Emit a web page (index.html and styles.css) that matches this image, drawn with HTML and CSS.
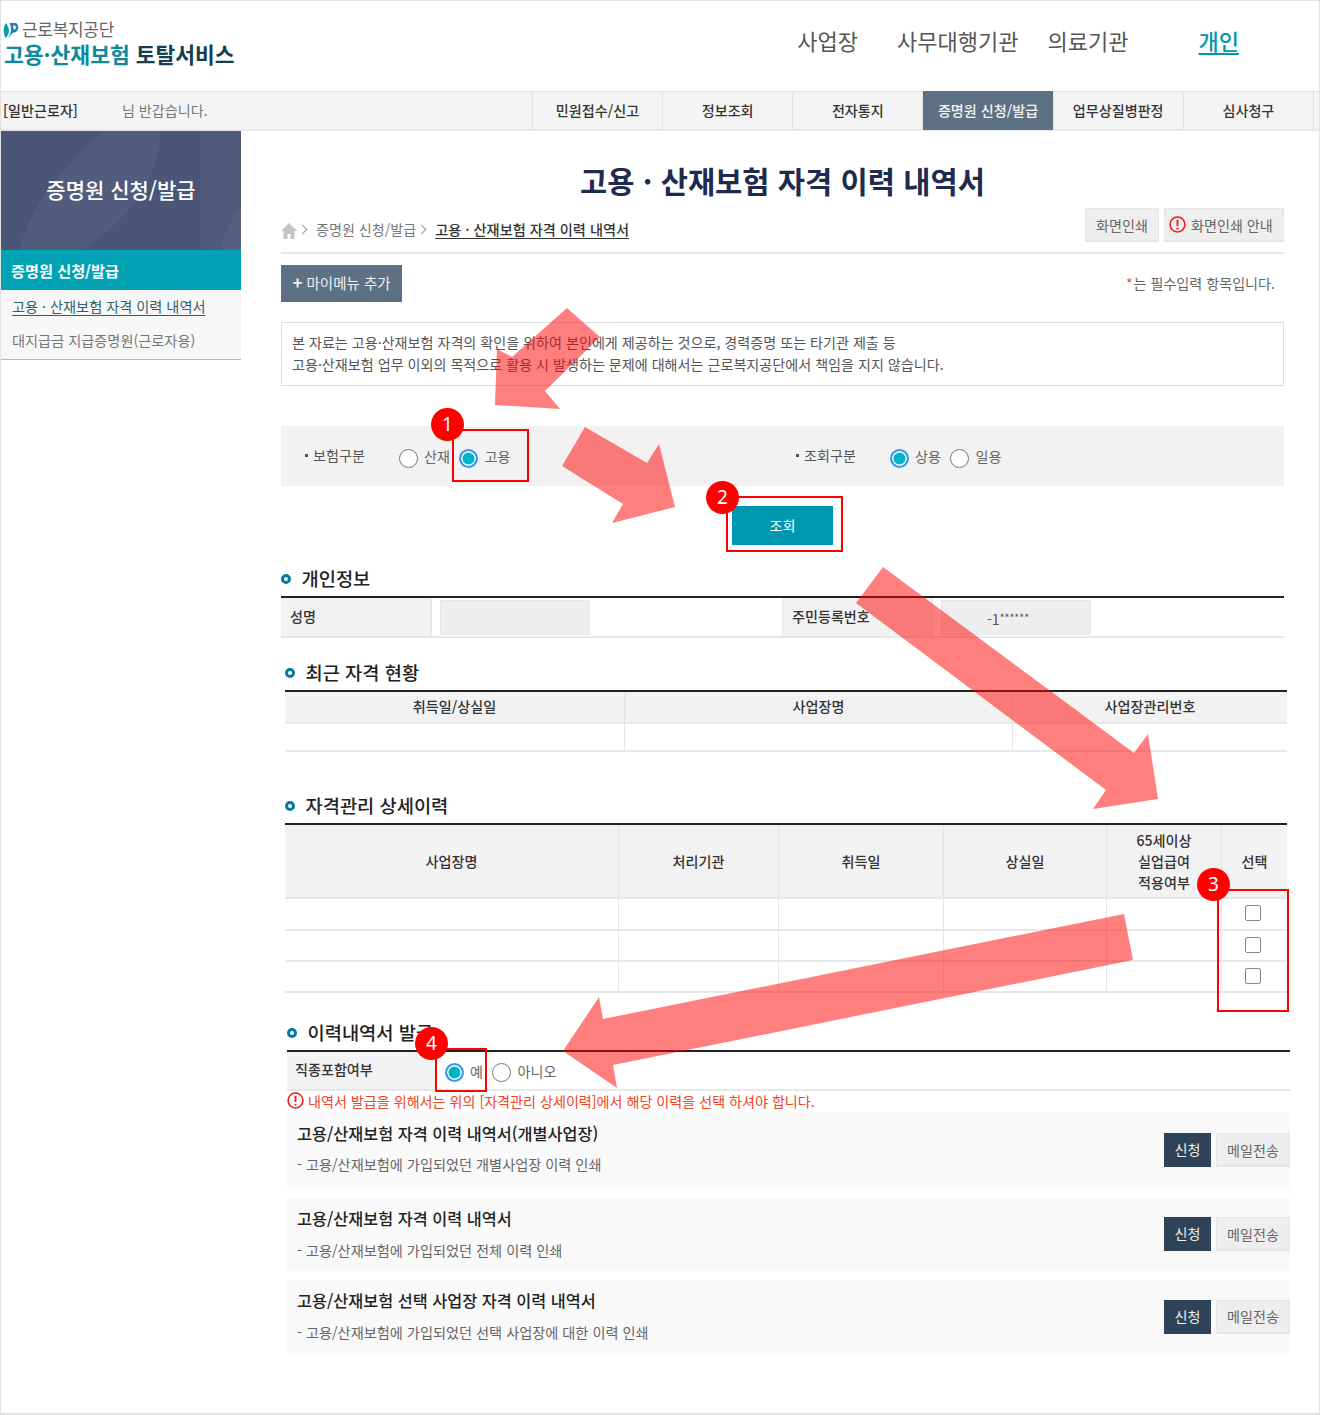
FILE: index.html
```html
<!DOCTYPE html>
<html lang="ko">
<head>
    <meta charset="UTF-8">
    <meta name="viewport" content="width=device-width, initial-scale=1.0">
    <title>고용·산재보험 토탈서비스</title>
    <link rel="stylesheet" href="styles.css">
</head>
<body>
<div class="page">
    <header class="top">
        <div class="logo">
            <div class="logo-org">
                <svg class="logo-mark" width="16" height="17" viewBox="0 0 16 17">
                    <path d="M3 1C0 5 0 11 2.500 16C7 12 7 6 3 1Z" fill="#0a9fb0"/>
                    <path d="M6.500 1H12C16.500 1 16.500 10 11 10.500C9 10.800 8 13 5 16C8.500 11 9 6 6.500 1Z" fill="#1c7fb5"/>
                    <path d="M10 3.500H11.500C13.500 3.500 13.500 7.500 11 7.500H10.500Z" fill="#fff"/>
                </svg>
                <span>근로복지공단</span>
            </div>
            <div class="logo-name"><span class="logo-teal">고용·산재보험</span> 토탈서비스</div>
        </div>
        <nav class="gnb">
            <a class="gnb-a">사업장</a>
            <a class="gnb-b">사무대행기관</a>
            <a class="gnb-c">의료기관</a>
            <a class="gnb-d">개인</a>
        </nav>
    </header>

    <div class="bar">
        <div class="user"><strong>[일반근로자]</strong><span class="hello">님 반갑습니다.</span></div>
        <ul class="tabs">
            <li>민원접수/신고</li>
            <li>정보조회</li>
            <li>전자통지</li>
            <li class="on">증명원 신청/발급</li>
            <li>업무상질병판정</li>
            <li>심사청구</li>
        </ul>
    </div>

    <div class="main">
        <aside class="side">
            <div class="side-title">
                <svg class="side-bg" width="240" height="119" viewBox="0 0 240 119">
                    <rect x="200" y="0" width="40" height="119" fill="#4e597b"/>
                    <path d="M18 119C30 70 70 30 101 0H160C160 40 130 90 80 119Z" fill="#525d7e"/>
                    <path d="M219 119C224 100 232 85 240 76V119Z" fill="#565f81"/>
                </svg>
                <span>증명원 신청/발급</span>
            </div>
            <div class="side-on">증명원 신청/발급</div>
            <ul class="side-list">
                <li class="cur">고용 · 산재보험 자격 이력 내역서</li>
                <li>대지급금 지급증명원(근로자용)</li>
            </ul>
        </aside>

        <section class="content">
            <h1>고용 · 산재보험 자격 이력 내역서</h1>

            <div class="crumb-row">
                <div class="crumb">
                    <svg class="home" width="16" height="16" viewBox="0 0 16 16">
                        <path d="M8 0L16 8H13.500V16H9.500V11H6.500V16H2.500V8H0Z" fill="#c4c4c4"/>
                    </svg>
                    <span class="chev"></span>
                    <span>증명원 신청/발급</span>
                    <span class="chev"></span>
                    <strong>고용 · 산재보험 자격 이력 내역서</strong>
                </div>
                <div class="crumb-btns">
                    <a class="btn-gray btn-print">화면인쇄</a>
                    <a class="btn-gray btn-guide">
                        <svg width="17" height="17" viewBox="0 0 16 16">
                            <circle cx="8" cy="8" r="7" fill="none" stroke="#f01c1c" stroke-width="1.500"/>
                            <path d="M8 3.500V9.500M8 11V12.800" stroke="#f01c1c" stroke-width="1.800"/>
                        </svg>
                        화면인쇄 안내
                    </a>
                </div>
            </div>

            <div class="my-row">
                <a class="btn-my"><b>+</b> 마이메뉴 추가</a>
                <p class="req"><i>*</i>는 필수입력 항목입니다.</p>
            </div>

            <div class="notice">
                본 자료는 고용·산재보험 자격의 확인을 위하여 본인에게 제공하는 것으로, 경력증명 또는 타기관 제출 등<br>
                고용·산재보험 업무 이외의 목적으로 활용 시 발생하는 문제에 대해서는 근로복지공단에서 책임을 지지 않습니다.
            </div>

            <form class="filter">
                <div class="filter-group">
                    <span class="filter-label">보험구분</span>
                    <label class="opt"><input type="radio" name="ins">산재</label>
                    <label class="opt"><input type="radio" name="ins" checked>고용</label>
                </div>
                <div class="filter-group">
                    <span class="filter-label">조회구분</span>
                    <label class="opt"><input type="radio" name="kind" checked>상용</label>
                    <label class="opt"><input type="radio" name="kind">일용</label>
                </div>
            </form>

            <div class="search-row"><button type="button" class="btn-search">조회</button></div>

            <h2 class="sec sec-1">개인정보</h2>
            <table class="tbl tbl-person">
                <tr>
                    <th class="p-label">성명</th>
                    <td class="p-field"><span class="ro"></span></td>
                    <th class="p-label">주민등록번호</th>
                    <td class="p-field"><span class="ro ro-num">-1<small>******</small></span></td>
                </tr>
            </table>

            <h2 class="sec sec-2">최근 자격 현황</h2>
            <table class="tbl tbl-recent">
                <tr>
                    <th class="r-a">취득일/상실일</th>
                    <th class="r-b">사업장명</th>
                    <th class="r-c">사업장관리번호</th>
                </tr>
                <tr class="row-empty"><td></td><td></td><td></td></tr>
            </table>

            <h2 class="sec sec-3">자격관리 상세이력</h2>
            <table class="tbl tbl-detail">
                <tr>
                    <th class="d-a">사업장명</th>
                    <th class="d-b">처리기관</th>
                    <th class="d-c">취득일</th>
                    <th class="d-d">상실일</th>
                    <th class="d-e">65세이상<br>실업급여<br>적용여부</th>
                    <th class="d-f">선택</th>
                </tr>
                <tr><td></td><td></td><td></td><td></td><td></td><td><input type="checkbox" class="chk"></td></tr>
                <tr><td></td><td></td><td></td><td></td><td></td><td><input type="checkbox" class="chk"></td></tr>
                <tr><td></td><td></td><td></td><td></td><td></td><td><input type="checkbox" class="chk"></td></tr>
            </table>

            <h2 class="sec sec-4">이력내역서 발급</h2>
            <div class="issue">
                <table class="tbl tbl-issue">
                    <tr>
                        <th class="i-label">직종포함여부</th>
                        <td>
                            <div class="opts">
                                <label class="opt"><input type="radio" name="job" checked>예</label>
                                <label class="opt"><input type="radio" name="job">아니오</label>
                            </div>
                        </td>
                    </tr>
                </table>
                <p class="warn">
                    <svg width="17" height="17" viewBox="0 0 16 16">
                        <circle cx="8" cy="8" r="7" fill="none" stroke="#f01c1c" stroke-width="1.500"/>
                        <path d="M8 3.500V9.500M8 11V12.800" stroke="#f01c1c" stroke-width="1.800"/>
                    </svg>
                    내역서 발급을 위해서는 위의 [자격관리 상세이력]에서 해당 이력을 선택 하셔야 합니다.
                </p>
                <div class="doc doc-first">
                    <div class="doc-text">
                        <h3>고용/산재보험 자격 이력 내역서(개별사업장)</h3>
                        <p>- 고용/산재보험에 가입되었던 개별사업장 이력 인쇄</p>
                    </div>
                    <a class="btn-apply">신청</a>
                    <a class="btn-gray btn-mail">메일전송</a>
                </div>
                <div class="doc">
                    <div class="doc-text">
                        <h3>고용/산재보험 자격 이력 내역서</h3>
                        <p>- 고용/산재보험에 가입되었던 전체 이력 인쇄</p>
                    </div>
                    <a class="btn-apply">신청</a>
                    <a class="btn-gray btn-mail">메일전송</a>
                </div>
                <div class="doc">
                    <div class="doc-text">
                        <h3>고용/산재보험 선택 사업장 자격 이력 내역서</h3>
                        <p>- 고용/산재보험에 가입되었던 선택 사업장에 대한 이력 인쇄</p>
                    </div>
                    <a class="btn-apply">신청</a>
                    <a class="btn-gray btn-mail">메일전송</a>
                </div>
            </div>
        </section>
    </div>

    <!-- annotations drawn over the captured page -->
    <svg class="arrows" width="1320" height="1415" viewBox="0 0 1320 1415">
        <polygon points="567,308 600,337 545,391 560,409 495,405 497,349 512,357"/>
        <polygon points="585,427 647,463 659,444 675,507 612,523 623,504 562,466"/>
        <polygon points="883,567 1134,753 1148,734 1158,799 1093,809 1106,790 856,603"/>
        <polygon points="1124,914 1133,960 613,1065 617,1088 563,1051 599,997 603,1019"/>
    </svg>
    <div class="mark mark-1"></div>
    <div class="mark mark-2"></div>
    <div class="mark mark-3"></div>
    <div class="mark mark-4"></div>
    <div class="num num-1">1</div>
    <div class="num num-2">2</div>
    <div class="num num-3">3</div>
    <div class="num num-4">4</div>
</div>
</body>
</html>
```

FILE: styles.css
```css
* {
    margin: 0;
    padding: 0;
    box-sizing: border-box;
}

body {
    font-family: "Noto Sans CJK KR", "Noto Sans", sans-serif;
    font-size: 14.100px;
    color: #444;
    background: #fff;
}

ul {
    list-style: none;
}

.page {
    position: relative;
    width: 1320px;
    height: 1415px;
    border: 1px solid #e2e2e2;
    border-bottom-width: 2px;
    overflow: hidden;
}

/* header */
.top {
    height: 90px;
    display: flex;
    justify-content: space-between;
}

.logo {
    padding: 18px 0 0 2px;
}

.logo-org {
    display: flex;
    align-items: center;
    gap: 3px;
    height: 20px;
    line-height: 20px;
    font-size: 17px;
    color: #666;
    letter-spacing: -0.3px;
}

.logo-mark {
    margin-top: 3px;
}

.logo-name {
    margin-top: 2px;
    padding-left: 1px;
    height: 26px;
    line-height: 26px;
    font-size: 21.500px;
    font-weight: 700;
    color: #153f4f;
    white-space: nowrap;
}

.logo-teal {
    color: #0c8a9c;
}

.gnb {
    display: flex;
    align-items: center;
    padding-right: 80px;
    font-size: 22px;
    color: #555;
    height: 78px;
}

.gnb-b { margin-left: 39px; }
.gnb-c { margin-left: 29px; }
.gnb-d {
    margin-left: 70px;
    color: #0098ac;
    font-weight: 500;
    text-decoration: underline;
    text-underline-offset: 3px;
}

/* tab bar */
.bar {
    height: 40px;
    display: flex;
    justify-content: space-between;
    background: #f4f4f4;
    border-top: 1px solid #e4e4e4;
    border-bottom: 2px solid #e8e8e8;
}

.user {
    padding-left: 2px;
    line-height: 36px;
    color: #333;
}

.user strong {
    font-weight: 500;
}

.hello {
    margin-left: 44px;
    color: #777;
}

.tabs {
    display: flex;
    margin-right: 5px;
    border-right: 1px solid #e4e4e4;
}

.tabs li {
    width: 130.200px;
    line-height: 36px;
    text-align: center;
    font-weight: 500;
    color: #333;
    border-left: 1px solid #e4e4e4;
    white-space: nowrap;
}

.tabs .on {
    background: #5d7084;
    color: #f4f4f4;
    margin-top: -1px;
    line-height: 38px;
    height: 39px;
}

/* layout */
.main {
    display: flex;
}

.side {
    width: 240px;
    flex: none;
}

.side-title {
    position: relative;
    height: 119px;
    background: #4a5577;
    color: #fff;
    font-size: 21px;
    font-weight: 500;
    line-height: 117px;
    text-align: center;
    overflow: hidden;
}

.side-title span {
    position: relative;
}

.side-bg {
    position: absolute;
    left: 0;
    top: 0;
}

.side-on {
    height: 40px;
    line-height: 40px;
    padding-left: 10px;
    background: #00a2b3;
    color: #fff;
    font-size: 15.200px;
    font-weight: 700;
}

.side-list {
    height: 70px;
    padding-left: 11px;
    background: #f7f7f7;
    border-bottom: 1px solid #bbb;
    font-size: 14.200px;
}

.side-list li {
    height: 34px;
    line-height: 32px;
    color: #777;
}

.side-list .cur {
    color: #2e6070;
    text-decoration: underline;
    text-underline-offset: 3px;
}

.content {
    width: 1040px;
    padding: 31px 0 0 40px;
}

h1 {
    width: 1003px;
    height: 38px;
    line-height: 38px;
    text-align: center;
    font-size: 29.600px;
    font-weight: 700;
    color: #1d2b4f;
}

/* breadcrumb */
.crumb-row {
    width: 1003px;
    height: 46px;
    margin-top: 8px;
    display: flex;
    justify-content: space-between;
    border-bottom: 2px solid #e8e8e8;
}

.crumb {
    display: flex;
    align-items: center;
    height: 42px;
    color: #777;
}

.crumb strong {
    font-size: 14.200px;
    font-weight: 500;
    color: #333;
    text-decoration: underline;
    text-underline-offset: 3px;
}

.home {
    margin-top: 3px;
}

.chev {
    width: 7px;
    height: 7px;
    margin: 0 10px 0 2px;
    border-top: 1px solid #999;
    border-right: 1px solid #999;
    transform: rotate(45deg);
}

.crumb-btns {
    display: flex;
    gap: 5px;
    height: 34px;
}

.btn-gray {
    display: flex;
    align-items: center;
    justify-content: center;
    background: #eee;
    border: 1px solid #e6e6e6;
    border-bottom-width: 2px;
    color: #666;
}

.btn-print { width: 74px; }

.btn-guide {
    width: 120px;
    gap: 5px;
    justify-content: flex-start;
    padding-left: 4px;
}

/* my menu */
.my-row {
    width: 1003px;
    margin-top: 11px;
    height: 37px;
    display: flex;
    justify-content: space-between;
    align-items: center;
}

.btn-my {
    width: 121px;
    height: 37px;
    line-height: 33px;
    text-align: center;
    font-size: 14.500px;
    background: #5d7084;
    color: #eef0f2;
}

.btn-my b {
    font-size: 17px;
}

.req {
    padding: 0 9px 2px 0;
    color: #666;
}

.req i {
    margin-right: 1px;
    color: #f05050;
    font-style: normal;
}

.notice {
    width: 1003px;
    height: 64px;
    margin-top: 20px;
    padding: 8px 10px;
    line-height: 22px;
    border: 1px solid #ddd;
    color: #555;
}

/* search */
.filter {
    width: 1003px;
    height: 60px;
    margin-top: 40px;
    padding-left: 23px;
    display: grid;
    grid-template-columns: 491px 1fr;
    align-items: center;
    background: #f2f2f2;
}

.filter-group {
    display: flex;
    align-items: center;
}

.filter-label {
    position: relative;
    width: 95px;
    padding: 0 0 3px 9px;
    color: #555;
}

.filter-label::before {
    content: "";
    position: absolute;
    left: 1px;
    top: 9px;
    width: 3px;
    height: 3px;
    background: #555;
}

.opts {
    display: flex;
    align-items: center;
}

.opt {
    display: inline-flex;
    align-items: center;
    gap: 6px;
    margin-right: 9.500px;
    color: #666;
}

.opt input {
    appearance: none;
    width: 19px;
    height: 19px;
    margin-top: 4px;
    background: #fff;
    border: 1px solid #777;
    border-radius: 50%;
}

.opt input:checked {
    background: #00b4c8;
    border: 2px solid #3c96ee;
    box-shadow: inset 0 0 0 1.500px #fff;
}

.search-row {
    width: 1003px;
    margin-top: 20px;
    display: flex;
    justify-content: center;
}

.btn-search {
    width: 101px;
    height: 39px;
    padding-bottom: 2px;
    border: 0;
    background: #0098b0;
    color: #fff;
    font: inherit;
}

/* section heading */
.sec {
    position: relative;
    height: 24px;
    line-height: 22px;
    padding-left: 20.500px;
    font-size: 18.700px;
    font-weight: 500;
    color: #222;
}

.sec::before {
    content: "";
    box-sizing: border-box;
    position: absolute;
    left: 0;
    top: 7px;
    width: 10px;
    height: 10px;
    border: 3px solid #007c9e;
    border-radius: 50%;
}

.sec-1 { margin-top: 22px; }
.sec-2 { margin: 23px 0 0 4px; }
.sec-3 { margin: 42px 0 0 4px; }
.sec-4 { margin: 28px 0 0 6px; }

/* tables */
.tbl {
    width: 1003px;
    margin-top: 5px;
    table-layout: fixed;
    border-collapse: separate;
    border-spacing: 0;
    border-top: 2px solid #222;
}

.tbl th {
    font-weight: 500;
    color: #333;
    background: #f2f2f2;
    border-bottom: 2px solid #e8e8e8;
    border-right: 1px solid #e4e4e4;
}

.tbl td {
    border-bottom: 2px solid #e8e8e8;
    border-right: 1px solid #e6e6ec;
    text-align: center;
}

.tbl tr > :last-child {
    border-right: 0;
}

.tbl-person tr {
    height: 40px;
}

.tbl-person th {
    width: 151px;
    padding: 0 0 2px 9px;
    text-align: left;
}

.tbl-person th:nth-child(3) {
    width: 150px;
}

.tbl-person td {
    padding-left: 8px;
    text-align: left;
    vertical-align: middle;
}

.ro {
    display: block;
    width: 150px;
    height: 35px;
    line-height: 33px;
    text-align: center;
    background: #eee;
    border: 1px solid #e6e6e6;
    color: #555;
}

.ro-num {
    padding-right: 16px;
}

.ro small {
    font-size: 10.500px;
    vertical-align: 3px;
}

.tbl-recent,
.tbl-detail {
    margin-left: 4px;
    width: 1002px;
}

.tbl-recent tr {
    height: 32px;
}

.tbl-recent th {
    padding-bottom: 3px;
}

.tbl-recent .row-empty {
    height: 28px;
}

.r-a { width: 340px; }
.r-b { width: 388px; }

.tbl-detail tr {
    height: 31px;
}

.tbl-detail tr:first-child {
    height: 74px;
}

.tbl-detail tr:nth-child(2) {
    height: 32px;
}

.tbl-detail th {
    line-height: 21px;
}

.d-a { width: 334px; }
.d-b { width: 160px; }
.d-c { width: 165px; }
.d-d { width: 163px; }
.d-e { width: 115px; }

.chk {
    appearance: none;
    display: block;
    width: 16px;
    height: 16px;
    margin: -2px 0 0 23px;
    background: #fff;
    border: 1px solid #888;
    border-radius: 2px;
}

.issue {
    width: 1003px;
    margin-left: 6px;
}

.tbl-issue tr {
    height: 39px;
}

.tbl-issue th {
    width: 149px;
    padding: 0 0 3px 8px;
    text-align: left;
    border-right: 0;
}

.tbl-issue td {
    padding: 0 0 0 9px;
    text-align: left;
    border-right: 0;
}

.warn {
    display: flex;
    align-items: center;
    gap: 4px;
    height: 21px;
    padding-bottom: 2px;
    color: #f0431e;
}

.doc {
    display: flex;
    align-items: center;
    height: 73px;
    margin-top: 9.500px;
    background: #f9f9f9;
}

.doc-first {
    height: 76px;
    margin-top: 0;
}

.doc-text {
    flex: 1;
    align-self: flex-start;
    padding: 8px 0 0 10px;
}

.doc-first .doc-text {
    padding-top: 9px;
}

.doc-text h3 {
    font-size: 16.300px;
    font-weight: 500;
    color: #222;
    line-height: 24px;
}

.doc-text p {
    margin-top: 10px;
    font-size: 14.200px;
    line-height: 20px;
    color: #666;
}

.doc-first .doc-text p {
    margin-top: 9px;
}

.btn-apply {
    width: 47px;
    height: 34px;
    line-height: 32px;
    text-align: center;
    background: #2f4358;
    color: #f0f0f0;
}

.btn-mail {
    width: 74px;
    height: 34px;
    margin-left: 5px;
}

/* annotations */
.arrows {
    position: absolute;
    left: -1px;
    top: -1px;
    pointer-events: none;
}

.arrows polygon {
    fill: #ff0000;
    fill-opacity: 0.5;
}

.mark {
    position: absolute;
    border: 2px solid #f00;
}

.mark-1 { left: 451px; top: 428px; width: 77px; height: 53px; }
.mark-2 { left: 725px; top: 495px; width: 117px; height: 56px; }
.mark-3 { left: 1216px; top: 888px; width: 72px; height: 123px; }
.mark-4 { left: 434px; top: 1047px; width: 52px; height: 44px; }

.num {
    position: absolute;
    width: 33px;
    height: 33px;
    line-height: 33px;
    text-align: center;
    border-radius: 50%;
    background: #f00;
    color: #fff;
    font-family: "Noto Sans", sans-serif;
    font-size: 19px;
}

.num-1 { left: 430px; top: 407px; }
.num-2 { left: 705px; top: 480px; }
.num-3 { left: 1196px; top: 867px; }
.num-4 { left: 414px; top: 1026px; }
```
